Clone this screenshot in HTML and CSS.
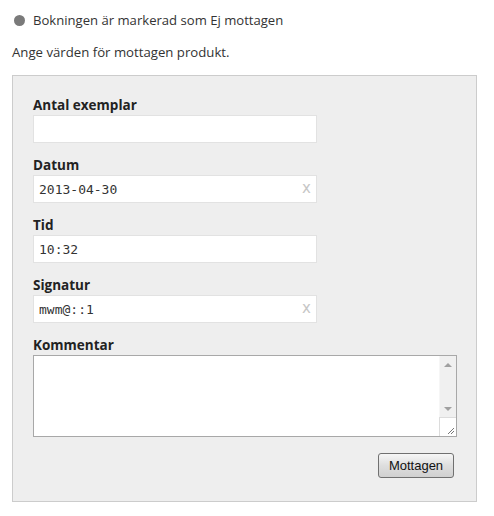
FILE: index.html
```html
<!DOCTYPE html>
<html lang="sv">
<head>
<meta charset="utf-8">
<link rel="stylesheet" href="styles.css">
</head>
<body>
<div class="status"><span class="dot"></span><span>Bokningen är markerad som Ej mottagen</span></div>
<p class="intro">Ange värden för mottagen produkt.</p>
<form class="panel">
  <label class="label">Antal exemplar</label>
  <div class="input"></div>
  <label class="label">Datum</label>
  <div class="input"><span class="val">2013-04-30</span><span class="clear">x</span></div>
  <label class="label">Tid</label>
  <div class="input"><span class="val">10:32</span></div>
  <label class="label">Signatur</label>
  <div class="input"><span class="val">mwm@::1</span><span class="clear">x</span></div>
  <label class="label">Kommentar</label>
  <div class="textarea">
    <div class="ta-body"></div>
    <div class="scroll">
      <div class="arrow up"></div>
      <div class="track"></div>
      <div class="arrow down"></div>
      <div class="grip"><svg width="16" height="18" viewBox="0 0 16 18"><path d="M8 16 L14 10 M11 16 L14 13" stroke="#777" stroke-width="1" fill="none"/></svg></div>
    </div>
  </div>
  <div class="actions"><button type="button" class="btn">Mottagen</button></div>
</form>
</body>
</html>
```
FILE: styles.css
```css
html, body { margin: 0; padding: 0; background: #fff; }
body {
  padding: 10px 17px 0 12px;
  font-family: "Open Sans", "Noto Sans", sans-serif;
  color: #333;
}
.status {
  display: flex;
  align-items: center;
  gap: 8px;
  font-size: 13.1px;
  height: 20px;
  padding-left: 2px;
}
.dot {
  width: 11px; height: 11px; border-radius: 50%;
  background: #7a7a7a;
  display: inline-block;
}
.intro {
  margin: 12px 0 0 0;
  font-size: 13.2px;
  line-height: 20px;
  height: 20px;
}
.panel {
  margin-top: 13px;
  background: #eeeeee;
  border: 1px solid #cccccc;
  padding: 19px 19px 23px 20px;
  display: flex;
  flex-direction: column;
}
.label {
  display: block;
  font-family: "Open Sans", sans-serif;
  font-weight: 700;
  font-size: 13.5px;
  line-height: 20px;
  color: #222;
}
.input {
  width: 284px;
  height: 28px;
  box-sizing: border-box;
  background: #fff;
  border: 1px solid #e2e2e2;
  margin-bottom: 12px;
  display: flex;
  align-items: center;
  justify-content: space-between;
  padding: 0 5px 0 5px;
  font-family: "DejaVu Sans Mono", monospace;
  font-size: 13px;
  color: #333;
}
.clear {
  font-family: "DejaVu Sans", sans-serif;
  font-size: 15px;
  line-height: 15px;
  color: #c6c6c6;
  margin-top: -2px;
}
.textarea {
  width: 424px;
  height: 82px;
  box-sizing: border-box;
  border: 1px solid #a8a8a8;
  background: #fff;
  display: flex;
}
.ta-body { flex: 1; }
.scroll {
  width: 16px;
  display: flex;
  flex-direction: column;
  background: #f0f0f0;
  border-left: 1px solid #f6f6f6;
}
.arrow {
  height: 17px;
  display: flex;
  align-items: center;
  justify-content: center;
}
.arrow::before {
  content: "";
  width: 0; height: 0;
  border-left: 4px solid transparent;
  border-right: 4px solid transparent;
}
.up::before { border-bottom: 4px solid #a0a0a0; }
.down::before { border-top: 4px solid #a0a0a0; }
.track { flex: 1; }
.grip {
  height: 18px;
  background: #fff;
  border-top: 1px solid #dcdcdc;
  margin-left: -1px;
  border-left: 1px solid #dcdcdc;
}
.grip svg { display: block; }
.actions {
  display: flex;
  justify-content: flex-end;
  margin-top: 16px;
  padding-right: 3px;
}
.btn {
  width: 76px;
  height: 25px;
  font-family: "Liberation Sans", Arial, sans-serif;
  font-size: 13px;
  color: #111;
  border: 1px solid #707070;
  border-radius: 3px;
  background: linear-gradient(#f6f6f6, #dedede 50%, #d0d0d0);
  padding: 0;
}
```
